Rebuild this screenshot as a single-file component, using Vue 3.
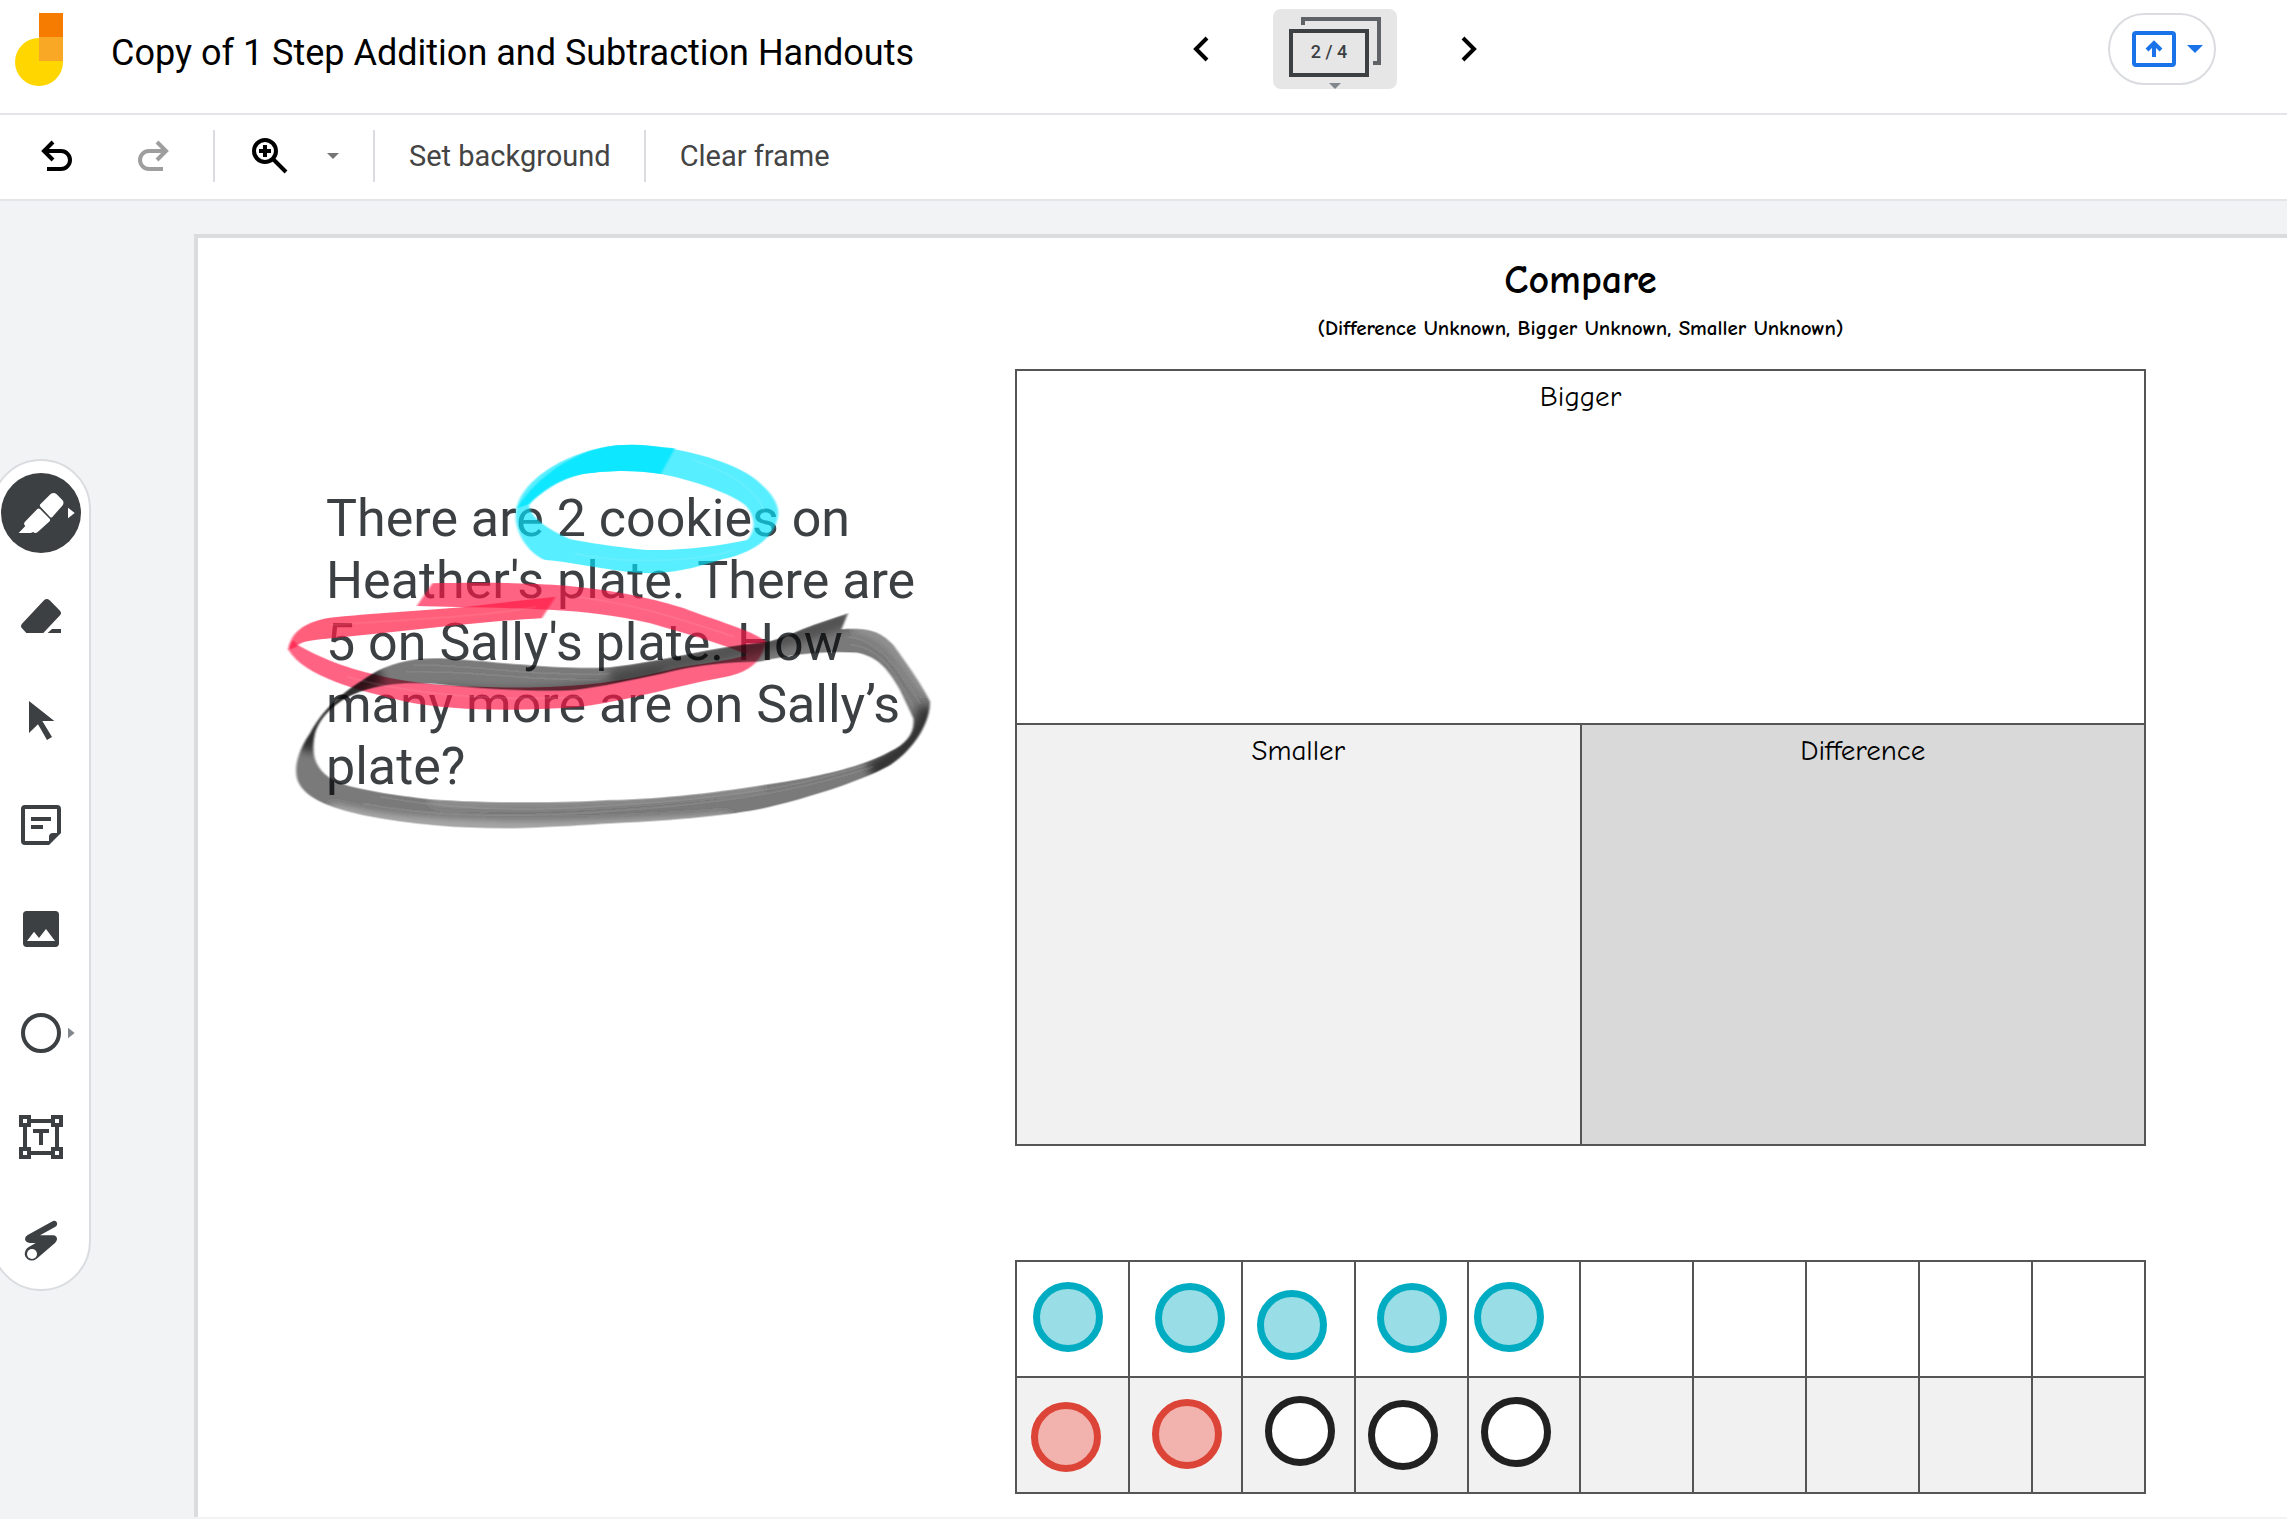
<script setup>
const counters = [
  { tone: 'teal', x: 53, y: 57 },
  { tone: 'teal', x: 175, y: 58 },
  { tone: 'teal', x: 277, y: 65 },
  { tone: 'teal', x: 397, y: 58 },
  { tone: 'teal', x: 494, y: 57 },
  { tone: 'red', x: 51, y: 177 },
  { tone: 'red', x: 172, y: 174 },
  { tone: 'open', x: 285, y: 171 },
  { tone: 'open', x: 388, y: 175 },
  { tone: 'open', x: 501, y: 172 }
]
</script>

<template>
  <div class="app">
    <header class="header">
      <div class="brand">
        <svg class="logo" viewBox="0 0 48 73" aria-hidden="true">
          <circle cx="24" cy="49" r="24" fill="#ffd600" />
          <path d="M24 0h24v24H24z" fill="#f57c00" />
          <path d="M24 24h24v24H24z" fill="#f9a825" />
        </svg>
        <h1 class="title">Copy of 1 Step Addition and Subtraction Handouts</h1>
      </div>
      <nav class="pager" aria-label="Frames">
        <button class="icon-button" type="button" aria-label="Previous frame">
          <svg width="48" height="48" viewBox="0 0 48 48"><path d="M30 13 19 24l11 11" fill="none" stroke="#000" stroke-width="4" /></svg>
        </button>
        <button class="frames" type="button" aria-label="Show frame bar">
          <svg class="frames-art" viewBox="0 0 124 80" aria-hidden="true">
            <path d="M30 16v-6h76v44h-6" fill="none" stroke="#5f6368" stroke-width="4" />
            <path d="M18 22h76v44H18z" fill="none" stroke="#3c4043" stroke-width="4" />
            <path d="M56 74h12l-6 6z" fill="#80868b" />
          </svg>
          <span class="count">2 / 4</span>
        </button>
        <button class="icon-button" type="button" aria-label="Next frame">
          <svg width="48" height="48" viewBox="0 0 48 48"><path d="m18 13 11 11-11 11" fill="none" stroke="#000" stroke-width="4" /></svg>
        </button>
      </nav>
      <div class="actions">
        <button class="present" type="button" aria-label="Open on a board">
          <svg width="104" height="68" viewBox="0 0 104 68">
            <rect x="24" y="18" width="40" height="32" rx="2" fill="none" stroke="#1a73e8" stroke-width="4" />
            <path d="M44 42V29M37 35l7-7 7 7" fill="none" stroke="#1a73e8" stroke-width="4" />
            <path d="M77 30h16l-8 8z" fill="#1a73e8" />
          </svg>
        </button>
      </div>
    </header>

    <div class="toolbar" role="toolbar" aria-label="Frame tools">
      <button class="icon-button undo" type="button" aria-label="Undo">
        <svg width="48" height="48" viewBox="0 0 48 48"><path d="M20 10 11 19l9 9M11 19h17a9 9 0 0 1 0 18H14" fill="none" stroke="#000" stroke-width="4" /></svg>
      </button>
      <button class="icon-button redo" type="button" aria-label="Redo">
        <svg width="48" height="48" viewBox="0 0 48 48"><path d="m28 10 9 9-9 9M37 19H20a9 9 0 0 0 0 18h14" fill="none" stroke="#9e9e9e" stroke-width="4" /></svg>
      </button>
      <span class="divider"></span>
      <button class="icon-button zoom" type="button" aria-label="Zoom">
        <svg width="48" height="48" viewBox="0 0 48 48">
          <circle cx="19" cy="19" r="11" fill="none" stroke="#000" stroke-width="4" />
          <path d="m27 27 13 13M19 13v12M13 19h12" fill="none" stroke="#000" stroke-width="4" />
        </svg>
      </button>
      <button class="zoom-menu" type="button" aria-label="Zoom options">
        <svg width="12" height="6" viewBox="0 0 12 6"><path d="M0 0h12L6 6z" fill="#757575" /></svg>
      </button>
      <span class="divider"></span>
      <button class="text-button" type="button">Set background</button>
      <span class="divider"></span>
      <button class="text-button" type="button">Clear frame</button>
    </div>

    <main class="workspace">
      <aside class="gutter">
        <div class="rail" role="toolbar" aria-label="Drawing tools">
          <button class="tool active" type="button" aria-label="Highlighter">
            <svg viewBox="3 69 240 240">
              <path d="M56 249l20-21q-7-7-1-13l37-38q4-3 8 0l29 29q3 4 0 8l-35 31q-5 5-10 4l-4-3-8 3z" fill="#fff" />
              <path d="M121 163l31-31q9-7 18 1l17 17q7 8 0 17l-30 34q-4 3-7 0l-29-31q-3-4 0-7z" fill="#fff" />
              <path d="M204 173v32l20-16z" fill="#fff" />
            </svg>
          </button>
          <button class="tool" type="button" aria-label="Eraser">
            <svg viewBox="3 381 240 240">
              <path d="M79 549l-13-14q-6-7 0-14l66-70q8-8 17 0l31 31q6 7 0 14l-50 53H79zM143 549l13-12h27v12z" />
            </svg>
          </button>
          <button class="tool" type="button" aria-label="Select">
            <svg viewBox="3 693 240 240"><path d="M87 753l76 60h-36l29 48-15 9-27-47-27 26z" /></svg>
          </button>
          <button class="tool" type="button" aria-label="Sticky note">
            <svg viewBox="3 1005 240 240">
              <path fill-rule="evenodd" d="M75 1065h96q12 0 12 12v72l-36 36H75q-12 0-12-12v-96q0-12 12-12zm0 12v96h72v-12q0-12 12-12h12v-72z" />
              <path d="M93 1101h60v12H93zM93 1125h36v12H93z" />
            </svg>
          </button>
          <button class="tool" type="button" aria-label="Add image">
            <svg viewBox="3 27 240 240">
              <path fill-rule="evenodd" d="M80 93h86q11 0 11 11v86q0 11-11 11H80q-11 0-11-11v-86q0-11 11-11zM81 183h84l-27-36-21 27-15-19z" />
            </svg>
          </button>
          <button class="tool" type="button" aria-label="Circle">
            <svg viewBox="3 339 240 240">
              <circle cx="123" cy="459" r="54" fill="none" stroke="#3c4043" stroke-width="12" />
              <path d="M204 443v32l20-16z" fill="#80868b" />
            </svg>
          </button>
          <button class="tool" type="button" aria-label="Text box">
            <svg viewBox="3 651 240 240">
              <path d="M75 723h96v96H75z" fill="none" stroke="#3c4043" stroke-width="12" />
              <path d="M63 711h24v24H63zM159 711h24v24h-24zM63 807h24v24H63zM159 807h24v24h-24z" fill="#fff" stroke="#3c4043" stroke-width="12" />
              <path d="M99 747h48v12h-18v36h-12v-36H99z" />
            </svg>
          </button>
          <button class="tool" type="button" aria-label="Laser">
            <svg viewBox="3 963 240 240">
              <path d="M155 1025q12-6 16 3 2 8-6 13l-45 25h39q12 1 12 12-1 7-6 11l-55 47q-14 10-27 2-14-10-6-27 3-6 8-9l22-13H90q-14-1-15-12 0-8 8-12z" />
              <circle cx="96" cy="1122" r="15" fill="#fff" />
            </svg>
          </button>
        </div>
      </aside>

      <section class="sheet" aria-label="Frame 2">
        <div class="problem">
          <p class="question">There are 2 cookies on Heather's plate. There are 5 on Sally's plate. How many more are on Sally’s plate?</p>
          <svg class="ink" viewBox="0 0 1568 1230" preserveAspectRatio="none" aria-hidden="true">
            <defs>
              <filter id="soft" x="-20%" y="-20%" width="140%" height="140%"><feGaussianBlur stdDeviation="14" /></filter>
              <filter id="edge"><feGaussianBlur stdDeviation="2" /></filter>
              <clipPath id="loop">
                <path clip-rule="evenodd" d="M1704 70L1600 105C1560 120 1500 150 1450 158C1300 170 1150 215 990 232C850 240 700 220 500 206C400 200 330 220 280 250C200 300 140 340 90 430C50 490 45 530 50 560C60 620 150 655 250 675C400 705 550 715 700 714C850 710 900 705 990 700C1200 690 1350 675 1450 655C1600 620 1750 570 1830 525C1900 480 1950 400 1950 335C1930 290 1880 220 1840 165C1800 125 1770 112 1684 118ZM1440 215C1550 190 1650 182 1730 188C1790 200 1820 230 1860 300L1900 385C1905 430 1880 460 1830 485C1750 530 1600 565 1450 585C1300 610 1100 630 990 630C850 640 600 640 450 628C350 615 220 600 160 570C110 540 90 500 105 430C120 380 170 330 240 305C320 275 420 275 500 285C650 300 800 305 880 300C970 290 1050 270 1150 250C1250 225 1350 215 1440 215Z" />
              </clipPath>
            </defs>
            <g fill="#00e5ff" filter="url(#edge)">
              <path opacity=".66" fill-rule="evenodd" d="M560 260C560 150 690 60 800 46C850 40 890 48 938 58C1030 80 1110 118 1145 165C1180 205 1190 240 1180 275C1165 330 1120 370 1050 388C980 418 930 428 880 430C780 425 710 398 630 390C590 370 560 310 560 260ZM592 225C620 180 660 142 720 132C800 118 850 122 905 132C980 150 1070 190 1105 225C1125 250 1135 295 1110 330C1030 350 960 362 870 360C790 350 730 338 690 328C640 300 592 262 592 225Z" />
              <path opacity=".85" d="M563 235C610 140 700 60 800 46C850 40 890 48 938 55L905 132C850 122 800 118 720 132C660 148 620 190 592 222Z" />
            </g>
            <g fill="#ff1744" filter="url(#edge)">
              <path opacity=".66" d="M362 460C500 455 600 460 680 467C800 480 900 510 960 535C1030 570 1120 600 1155 635C1145 690 1120 725 1060 740C950 765 800 820 700 832C550 845 400 840 300 815C180 780 60 740 20 660C22 645 26 636 32 630L42 645C90 680 150 712 230 735C350 775 550 775 650 770C760 765 850 745 940 715C1000 700 1060 695 1110 675C1050 640 960 610 880 580C800 555 720 545 650 540C500 530 400 532 325 528Z" />
              <path opacity=".7" d="M20 660C25 600 70 570 130 562C250 545 400 540 500 522L655 500L622 565C500 572 380 592 250 608L110 626C70 630 45 636 40 650Z" />
            </g>
            <g filter="url(#edge)">
              <g transform="translate(0 480) scale(.792 1)" clip-path="url(#loop)">
                <path d="M0 0h1980v750H0z" opacity=".52" />
                <g fill="none" stroke="#000" filter="url(#soft)">
                  <path d="M300 250C200 300 110 380 75 480" stroke-width="54" opacity=".65" />
                  <path d="M1945 350C1930 430 1860 500 1770 545" stroke-width="54" opacity=".6" />
                  <path d="M480 300C700 320 900 310 1150 250" stroke-width="20" opacity=".4" />
                  <path d="M990 260C1150 220 1450 180 1704 85" stroke-width="50" opacity=".34" />
                </g>
                <g fill="none" stroke="#fff" filter="url(#soft)">
                  <path d="M150 655C400 725 900 720 1350 685" stroke-width="20" opacity=".6" />
                  <path d="M450 632C700 650 1000 640 1450 585" stroke-width="12" opacity=".4" />
                  <path d="M1720 115C1830 120 1870 230 1940 310" stroke-width="14" opacity=".4" />
                </g>
                <g fill="none" stroke="#fff" stroke-width="3" opacity=".14">
                  <path d="M400 225C600 225 750 260 990 250M380 245C600 240 750 275 960 268M250 640C500 690 800 680 1100 655S1600 590 1780 530M300 620C600 675 850 660 1150 635S1600 575 1760 525M1700 140C1800 150 1860 240 1920 340M1710 165C1800 170 1840 240 1900 350" />
                </g>
              </g>
            </g>
            <g fill="none" stroke="#fff" stroke-width="4" opacity=".12">
              <path d="M120 585C300 570 480 560 610 530M700 500C850 520 980 580 1080 620M160 740C350 810 600 810 720 800M700 370C800 400 980 400 1080 360M980 90C1080 130 1130 180 1150 240" />
            </g>
          </svg>
        </div>

        <div class="worksheet">
          <h2 class="heading">Compare</h2>
          <p class="subheading">(Difference Unknown, Bigger Unknown, Smaller Unknown)</p>
          <table class="organizer">
            <tbody>
              <tr class="upper"><th colspan="2">Bigger</th></tr>
              <tr class="lower">
                <th class="smaller">Smaller</th>
                <th class="difference">Difference</th>
              </tr>
            </tbody>
          </table>
          <div class="mat">
            <table class="frame-grid" aria-label="Counting grid">
              <tbody>
                <tr v-for="row in 2" :key="row"><td v-for="cell in 10" :key="cell"></td></tr>
              </tbody>
            </table>
            <span
              v-for="(counter, index) in counters"
              :key="index"
              class="counter"
              :class="counter.tone"
              :style="{ left: counter.x + 'px', top: counter.y + 'px' }"
            ></span>
          </div>
        </div>
      </section>
    </main>
  </div>
</template>

<style>
body {
  margin: 0;
  background: #f1f3f4;
}
</style>

<style scoped>
.app {
  display: flex;
  flex-direction: column;
  min-height: 100vh;
  overflow: hidden;
  font-family: Roboto, "Liberation Sans", sans-serif;
  color: #3c4043;
}
button {
  display: flex;
  align-items: center;
  justify-content: center;
  flex: none;
  margin: 0;
  padding: 0;
  border: 0;
  background: none;
  color: inherit;
  font: inherit;
  cursor: pointer;
}
svg {
  display: block;
}
.header {
  display: grid;
  grid-template-columns: 1177fr auto 794fr;
  box-sizing: border-box;
  height: 115px;
  border-bottom: 2px solid #e3e5e8;
  background: #fff;
}
.brand {
  display: flex;
  align-items: flex-start;
  padding: 13px 0 0 15px;
}
.logo {
  flex: none;
  width: 48px;
  height: 73px;
}
.title {
  margin: 18px 0 0 48px;
  color: #000;
  font-size: 36px;
  font-weight: 400;
  line-height: 44px;
  white-space: nowrap;
}
.pager {
  display: flex;
  align-items: flex-start;
  gap: 48px;
  padding-top: 9px;
}
.icon-button {
  width: 48px;
  height: 48px;
}
.pager .icon-button {
  margin-top: 16px;
}
.frames {
  position: relative;
  width: 124px;
  height: 80px;
  border-radius: 8px;
  background: #e6e6e6;
}
.frames-art {
  position: absolute;
  inset: 0;
}
.count {
  position: relative;
  margin: 6px 12px 0 0;
  font-size: 18px;
  font-weight: 500;
  line-height: 20px;
}
.actions {
  display: flex;
  justify-content: flex-end;
  align-items: flex-start;
  padding: 13px 71px 0 0;
}
.present {
  border: 2px solid #dadce0;
  border-radius: 36px;
}
.toolbar {
  display: flex;
  align-items: center;
  box-sizing: border-box;
  height: 86px;
  padding: 0 0 3px 33px;
  border-bottom: 2px solid #e3e5e8;
  background: #fff;
}
.redo {
  margin-left: 48px;
}
.divider {
  width: 2px;
  height: 52px;
  background: #dadce0;
}
.redo + .divider {
  margin-left: 36px;
}
.zoom {
  margin-left: 31px;
}
.zoom-menu {
  width: 40px;
  height: 48px;
  margin: 0 20px 0 19px;
}
.text-button {
  padding: 0 33px 0 34px;
  color: #444;
  font-size: 29px;
  line-height: 36px;
}
.workspace {
  display: flex;
  flex: 1;
  padding-bottom: 2px;
  background: #f1f3f4;
}
.gutter {
  flex: none;
  width: 194px;
}
.rail {
  display: flex;
  flex-direction: column;
  align-items: center;
  gap: 24px;
  width: 96px;
  margin: 258px 0 0 -9px;
  padding: 12px 0 8px;
  border: 2px solid #dadce0;
  border-radius: 50px;
  background: #fff;
}
.tool {
  width: 80px;
  height: 80px;
  border-radius: 50%;
  fill: #3c4043;
}
.tool svg {
  width: 80px;
  height: 80px;
}
.tool.active {
  background: #3c4043;
}
.sheet {
  display: grid;
  grid-template-columns: minmax(0, 689fr) minmax(0, 1131fr);
  align-items: start;
  flex: 1;
  margin-top: 33px;
  padding: 0 141px 22px 128px;
  border-top: 4px solid #dadcde;
  border-left: 4px solid #dadcde;
  background: #fff;
}
.problem {
  position: relative;
  max-width: 620px;
  margin-top: 250px;
}
.question {
  margin: 0;
  font-size: 52px;
  line-height: 62px;
}
.ink {
  position: absolute;
  left: -46px;
  top: -58px;
  width: 660px;
  height: 410px;
  pointer-events: none;
}
.worksheet {
  color: #000;
  font-family: "Comic Sans MS", "Comic Neue", Lato, "Liberation Sans", sans-serif;
}
.heading {
  margin: 14px 0 0;
  font-size: 40px;
  font-weight: 700;
  line-height: 56px;
  text-align: center;
}
.subheading {
  margin: 6px 0 27px;
  font-size: 21px;
  font-weight: 700;
  line-height: 28px;
  text-align: center;
}
.organizer,
.frame-grid {
  width: 100%;
  border-collapse: collapse;
  table-layout: fixed;
}
.organizer th {
  padding: 8px 0 0;
  border: 2px solid #555;
  font-size: 29px;
  font-weight: 400;
  line-height: 36px;
  vertical-align: top;
}
.upper {
  height: 354px;
}
.lower {
  height: 421px;
}
.smaller {
  background: #f1f1f1;
}
.difference {
  background: #d9d9d9;
}
.mat {
  position: relative;
  margin-top: 114px;
}
.frame-grid tr {
  height: 116px;
}
.frame-grid td {
  padding: 0;
  border: 2px solid #555;
}
.frame-grid tr:last-child {
  background: #f1f1f1;
}
.counter {
  position: absolute;
  box-sizing: border-box;
  width: 70px;
  height: 70px;
  border: 7px solid;
  border-radius: 50%;
  transform: translate(-50%, -50%);
}
.teal {
  border-color: #00acc1;
  background: #99dee6;
}
.red {
  border-color: #db4437;
  background: #f2b2ae;
}
.open {
  border-color: #212121;
  background: #fff;
}
</style>
